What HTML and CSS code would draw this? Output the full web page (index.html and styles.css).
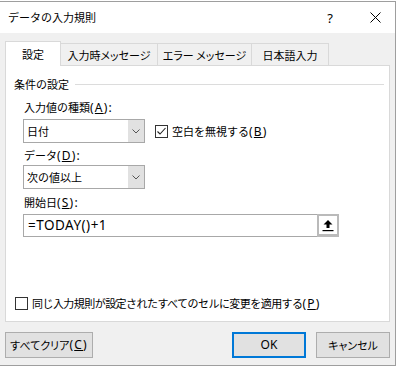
FILE: index.html
```html
<!DOCTYPE html>
<html lang="ja">
<head>
<meta charset="utf-8">
<title>データの入力規則</title>
<link rel="stylesheet" href="styles.css">
</head>
<body>
<div class="dialog">
  <div class="titlebar">
    <span class="title">データの入力規則</span>
    <span class="tb-btn help">?</span>
    <span class="tb-btn close"><svg width="11" height="11" viewBox="0 0 11 11"><path d="M0.5 0.5 L10.5 10.5 M10.5 0.5 L0.5 10.5" stroke="#000" stroke-width="1" fill="none"/></svg></span>
  </div>
  <div class="content">
    <div class="tabs">
      <div class="tab active t1">設定</div>
      <div class="tab t2">入力時メッセージ</div>
      <div class="tab t3">エラー メッセージ</div>
      <div class="tab t4">日本語入力</div>
    </div>
    <div class="panel">
      <div class="group"><span class="group-label">条件の設定</span><span class="rule"></span></div>
      <div class="form">
        <div class="lbl l1">入力値の種類<span class="en hk">(<u>A</u>):</span></div>
        <div class="row">
          <div class="combo"><span class="val">日付</span><span class="drop"><svg width="8" height="5" viewBox="0 0 8 5"><path d="M0.5 0.5 L4 4 L7.5 0.5" stroke="#555" stroke-width="1" fill="none"/></svg></span></div>
          <div class="check c1"><span class="box"><svg width="11" height="11" viewBox="0 0 11 11"><path d="M1.5 5.5 L4 8 L9.5 2" stroke="#222" stroke-width="1.1" fill="none"/></svg></span><span>空白を無視する<span class="en hk">(<u>B</u>)</span></span></div>
        </div>
        <div class="lbl l2">データ<span class="en hk">(<u>D</u>):</span></div>
        <div class="combo c2"><span class="val">次の値以上</span><span class="drop"><svg width="8" height="5" viewBox="0 0 8 5"><path d="M0.5 0.5 L4 4 L7.5 0.5" stroke="#555" stroke-width="1" fill="none"/></svg></span></div>
        <div class="lbl l3">開始日<span class="en hk">(<u>S</u>):</span></div>
        <div class="refedit"><span class="val">=TODAY()+1</span><span class="refbtn"><svg width="12" height="13" viewBox="0 0 12 13"><path d="M6 1 L10.5 5.5 L7.5 5.5 L7.5 9 L4.5 9 L4.5 5.5 L1.5 5.5 Z" fill="#000"/><rect x="0.5" y="11" width="11" height="1.2" fill="#000"/></svg></span></div>
      </div>
      <div class="check apply"><span class="box"></span><span class="apply-text">同じ入力規則が設定されたすべてのセルに変更を適用する<span class="en hk">(<u>P</u>)</span></span></div>
    </div>
    <div class="buttons">
      <button class="btn clear">すべてクリア<span class="en hk">(<u>C</u>)</span></button>
      <button class="btn ok"><span class="en">OK</span></button>
      <button class="btn cancel">キャンセル</button>
    </div>
  </div>
</div>
</body>
</html>
```
FILE: styles.css
```css
* { box-sizing: border-box; }
html, body {
  margin: 0;
  padding: 0;
  width: 398px;
  height: 368px;
  overflow: hidden;
  background: #ffffff;
}
body {
  font-family: "Noto Sans CJK JP", sans-serif;
  font-size: 11px;
  color: #000;
}
.en {
  font-family: "Noto Sans", "Noto Sans CJK JP", sans-serif;
  font-size: 12px;
}
.hk { letter-spacing: 1.2px; }
u { text-decoration: underline; text-underline-offset: 1px; }

.dialog {
  margin: 1px 0 0 -1px;
  width: 397px;
  height: 365px;
  border: 1px solid #9e9e9e;
  background: #f0f0f0;
  display: flex;
  flex-direction: column;
}
.titlebar {
  flex: none;
  height: 31px;
  background: #fff;
  display: flex;
  align-items: center;
}
.title {
  flex: 1;
  padding-left: 8px;
  line-height: 16px;
  margin-top: -2px;
}
.tb-btn {
  width: 40px;
  height: 31px;
  display: flex;
  align-items: center;
  justify-content: center;
}
.help {
  margin-right: 5px;
  font-family: "Noto Sans", sans-serif;
  font-size: 13px;
}
.content {
  flex: 1;
  padding: 8px 5px 0;
  display: flex;
  flex-direction: column;
}
.tabs {
  display: flex;
  align-items: flex-end;
  height: 24px;
  position: relative;
  z-index: 1;
}
.tab {
  height: 22px;
  border: 1px solid #d9d9d9;
  border-bottom: none;
  margin-left: -1px;
  background: #f0f0f0;
  display: flex;
  align-items: center;
  justify-content: center;
  font-feature-settings: "palt";
  line-height: 16px;
}
.tab.active {
  margin-left: 0;
  height: 25px;
  margin-bottom: -1px;
  background: #fff;
  position: relative;
  z-index: 2;
}
.t1 { width: 56px; }
.t2 { width: 98px; }
.t3 { width: 95px; }
.t4 { width: 78px; }

.panel {
  height: 257px;
  border: 1px solid #d9d9d9;
  background: #fff;
  display: flex;
  flex-direction: column;
}
.group {
  margin-top: 10px;
  height: 16px;
  padding-left: 8px;
  display: flex;
  align-items: center;
}
.group-label { line-height: 16px; }
.rule {
  flex: 1;
  height: 1px;
  background: #dcdcdc;
  margin-left: 6px;
  margin-right: 5px;
}
.form { padding-left: 17px; }
.lbl {
  height: 16px;
  line-height: 16px;
  padding-left: 1px;
}
.l1 { margin-top: 7px; }
.l2 { margin-top: 4px; }
.l3 { margin-top: 5px; }
.row {
  display: flex;
  align-items: center;
  margin-top: 4px;
}
.combo {
  width: 122px;
  height: 24px;
  border: 1px solid #a8a8a8;
  background: #fff;
  display: flex;
}
.combo.c2 { margin-top: 2px; }
.combo .val {
  flex: 1;
  padding-left: 3px;
  line-height: 22px;
}
.drop {
  width: 16px;
  background: #e1e1e1;
  display: flex;
  align-items: center;
  justify-content: center;
}
.check {
  display: flex;
  align-items: center;
  height: 16px;
  line-height: 16px;
}
.box {
  flex: none;
  width: 13px;
  height: 13px;
  border: 1px solid #333;
  background: #fff;
  margin-right: 4px;
  display: flex;
}
.c1 { margin-left: 10px; }
.refedit {
  width: 316px;
  height: 23px;
  margin-top: 4px;
  border: 1px solid #a8a8a8;
  display: flex;
}
.refedit .val {
  flex: 1;
  padding-left: 4px;
  line-height: 21px;
  font-family: "Noto Sans", sans-serif;
  font-size: 13.5px;
  letter-spacing: 0.5px;
}
.refbtn {
  width: 22px;
  height: 23px;
  margin: -1px -1px -1px 0;
  border: 2px solid #bababa;
  border-bottom-width: 3px;
  background: #fff;
  display: flex;
  align-items: center;
  justify-content: center;
}
.apply {
  margin-top: 58px;
  margin-left: 9px;
}
.apply-text { letter-spacing: -0.55px; }

.buttons {
  display: flex;
  margin-top: 10px;
}
.btn {
  height: 26px;
  padding: 0;
  margin: 0;
  border: 1px solid #adadad;
  background: #e1e1e1;
  color: #000;
  font-family: "Noto Sans CJK JP", sans-serif;
  font-size: 11px;
  line-height: 16px;
  display: flex;
  align-items: center;
  justify-content: center;
  font-feature-settings: "palt";
}
.clear { width: 88px; }
.ok {
  width: 74px;
  margin-left: auto;
  border: 2px solid #0078d7;
}
.cancel {
  width: 74px;
  margin-left: 10px;
}
```
